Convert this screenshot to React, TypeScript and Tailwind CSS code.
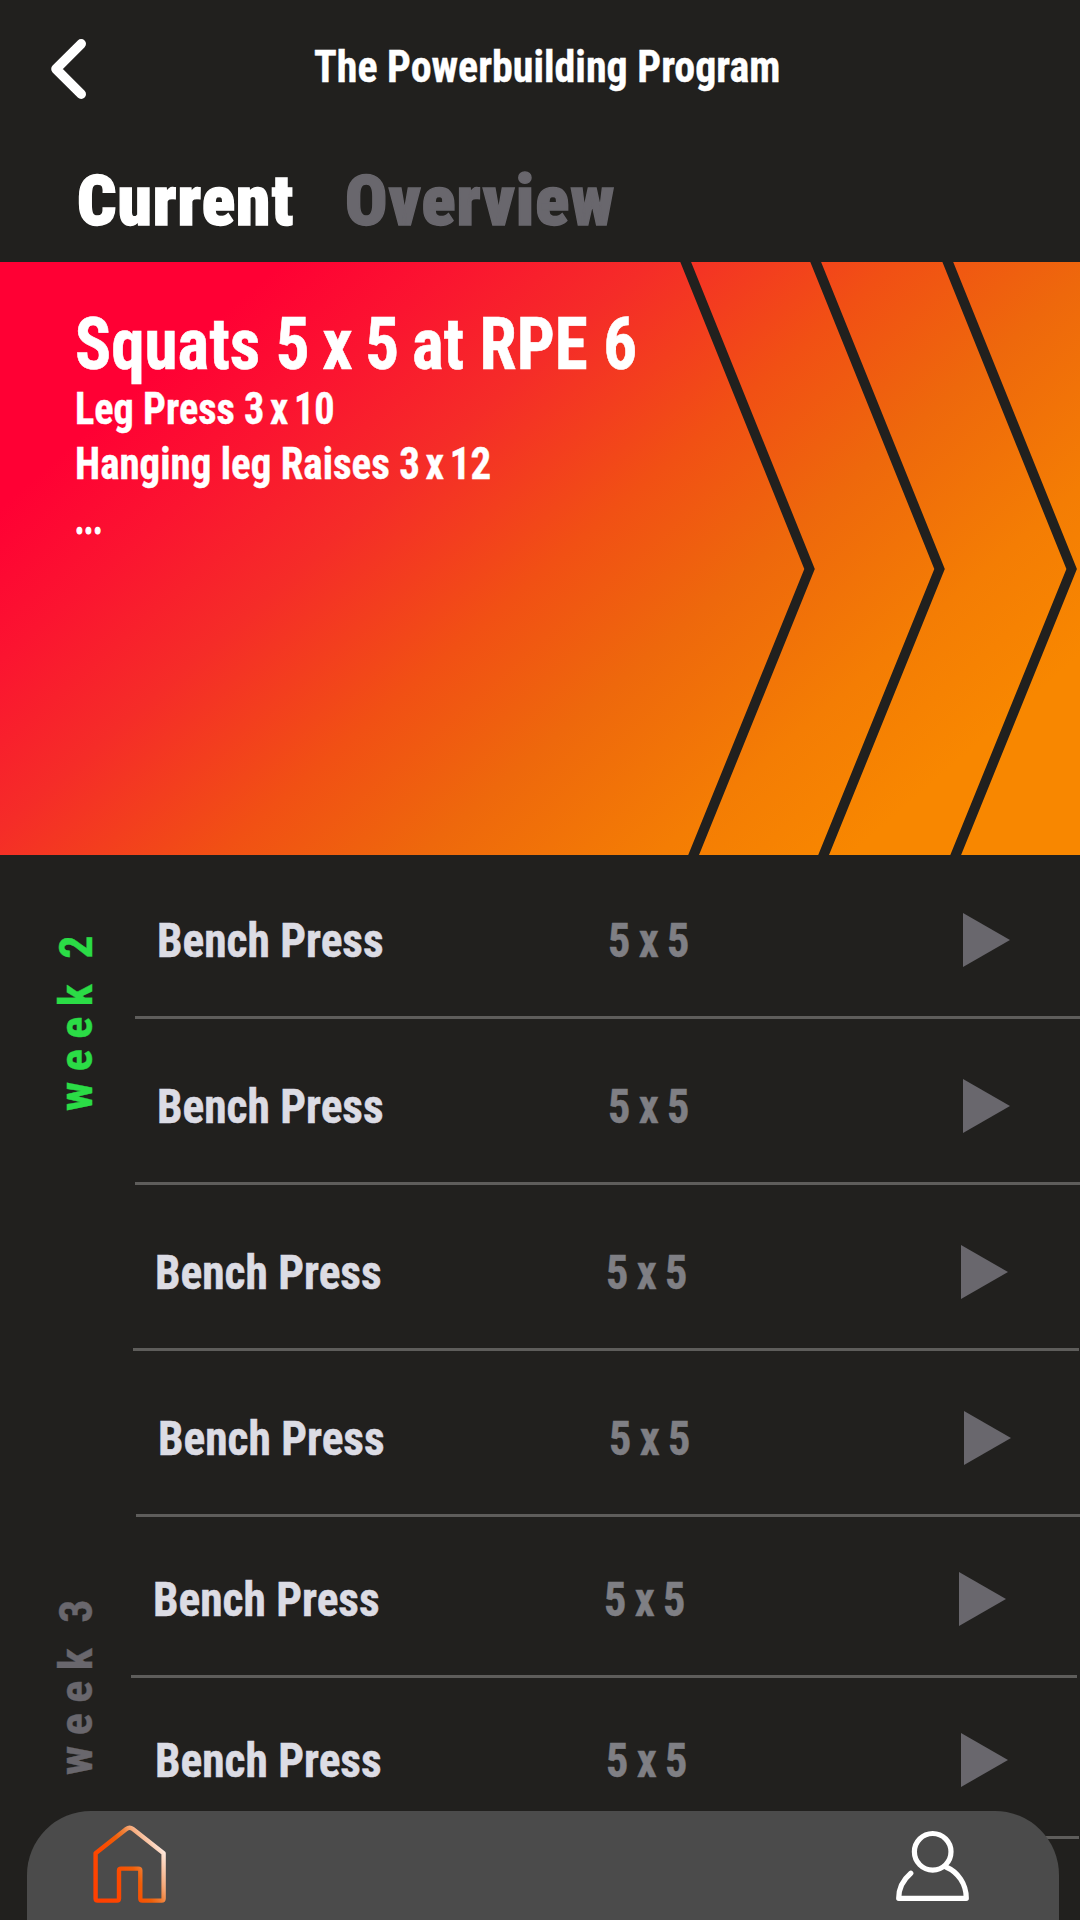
import { useLayoutEffect, useRef, useState, type ReactNode } from "react";

// Condenses a line of text horizontally so that it fills the given width.
function Fit({ width, className = "", children }: { width: number; className?: string; children: ReactNode }) {
  const ref = useRef<HTMLSpanElement>(null);
  const [scale, setScale] = useState(1);
  useLayoutEffect(() => {
    if (ref.current) setScale(width / ref.current.offsetWidth);
  }, [width]);
  return (
    <span ref={ref} className={`inline-block origin-left whitespace-nowrap ${className}`} style={{ transform: `scaleX(${scale})` }}>
      {children}
    </span>
  );
}

const BackIcon = () => (
  <svg className="h-[62px] w-[38px]" viewBox="0 0 38 62" fill="none" stroke="#fff" strokeWidth="9.6" strokeLinecap="round" strokeLinejoin="round">
    <path d="M31.200 5.800 6 31 31.200 56.200" />
  </svg>
);

const PlayIcon = () => (
  <svg className="h-[54px] w-[47px]" viewBox="0 0 47 54" fill="#69676d">
    <path d="M0 0 47 27 0 54z" />
  </svg>
);

const Chevrons = () => (
  <svg className="absolute inset-y-0 right-0 h-[593px] w-[400px]" viewBox="680 0 400 593" fill="#21201e">
    <path d="M680.3 0h10.8L814.8 307 699 593h-10.8L804.3 307z" />
    <path d="M810.3 0h10.8L944.8 307 829 593h-10.8L934.3 307z" />
    <path d="M942.4 0h10.8L1076.9 307 961.1 593h-10.8L1066.4 307z" />
  </svg>
);

const HomeIcon = () => (
  <svg className="h-[78px] w-[74px]" viewBox="0 0 74 78" fill="none">
    <defs>
      <linearGradient id="home" gradientUnits="userSpaceOnUse" x1="2" y1="66" x2="73" y2="26">
        <stop offset="0" stopColor="#ff4000" />
        <stop offset="0.36" stopColor="#fb4a00" />
        <stop offset="0.54" stopColor="#ef5e08" />
        <stop offset="0.67" stopColor="#f0813a" />
        <stop offset="0.76" stopColor="#f6a878" />
        <stop offset="1" stopColor="#fff0e8" />
      </linearGradient>
    </defs>
    <path
      d="M2.6 28.3 33.3 4Q36.6 1.4 39.9 4L70.6 28.3V73.6Q70.6 75.6 68.6 75.6H49.3Q47.3 75.6 47.3 73.6V45.6Q47.3 43.6 45.3 43.6H28Q26 43.6 26 45.6V73.6Q26 75.6 24 75.6H4.6Q2.6 75.6 2.6 73.6Z"
      stroke="url(#home)"
      strokeWidth="4.4"
      strokeLinejoin="round"
    />
  </svg>
);

const UserIcon = () => (
  <svg className="h-[72px] w-[75px]" viewBox="0 0 75 72" fill="none" stroke="#fff" strokeWidth="5.2" strokeLinecap="round" strokeLinejoin="round">
    <circle cx="37.7" cy="21.800" r="18.3" />
    <path d="M15.800 43.300C8 50 3.700 58.500 3.700 68.300H71.300C71.300 54 63 42 51 37" />
  </svg>
);

function ExerciseRow({ className }: { className: string }) {
  return (
    <div className={`grid w-[946px] shrink-0 grid-cols-[449px_357px_1fr] items-end border-b-[3px] border-[#5e5d5b] pb-[49px] pl-[22px] leading-[53px] ${className}`}>
      <Fit width={227} className="justify-self-start text-[48px] font-bold text-[#dcdce4] [-webkit-text-stroke:0.5px_#dcdce4]">Bench Press</Fit>
      <Fit width={81} className="ml-[2px] justify-self-start text-[48px] font-bold text-[#7f7f84] [-webkit-text-stroke:0.5px_#7f7f84] [word-spacing:-2px]">5 x 5</Fit>
      <PlayIcon />
    </div>
  );
}

function Week({ label, color, rows, className }: { label: string; color: string; rows: string[]; className: string }) {
  return (
    <section className="flex">
      <div className="w-[131px] shrink-0">
        <div className={`ml-[48px] rotate-180 text-[46px] font-bold leading-[56px] tracking-[10.5px] [word-spacing:-6px] [-webkit-text-stroke:0.4px_currentColor] [writing-mode:vertical-rl] ${color} ${className}`}>{label}</div>
      </div>
      <div className="flex flex-col">
        {rows.map((row, i) => (
          <ExerciseRow key={i} className={row} />
        ))}
      </div>
    </section>
  );
}

export default function App() {
  return (
    <div className="relative flex h-[1920px] w-[1080px] flex-col overflow-hidden bg-[#21201e] font-['Roboto_Condensed','Roboto',sans-serif] text-white">
      <header className="flex h-[262px] shrink-0 flex-col">
        <div className="flex h-[165px] items-start pl-[50px] pt-[38px]">
          <BackIcon />
          <h1 className="ml-[226px] mt-[7px] text-[44px] font-bold leading-none">
            <Fit width={466} className="[-webkit-text-stroke:0.4px_white]">The Powerbuilding Program</Fit>
          </h1>
        </div>
        <nav className="flex text-[71px] font-black leading-none tracking-[1px]">
          <div className="ml-[77px] w-[268px]">
            <Fit width={217} className="[-webkit-text-stroke:1.4px_white]">Current</Fit>
          </div>
          <Fit width={270} className="text-[#69676d] [-webkit-text-stroke:1.4px_#69676d]">Overview</Fit>
        </nav>
      </header>

      <section className="relative h-[593px] shrink-0 bg-[linear-gradient(139deg,#ff0034_16%,#fb1430_26%,#f52c28_37%,#f15014_51%,#ee680c_62.5%,#f47d04_76%,#f88700_87%)] pl-[75px] pt-[46px] font-bold">
        <Chevrons />
        <h2 className="h-[74px] text-[72px] leading-[74px]">
          <Fit width={562} className="[-webkit-text-stroke:0.6px_white]">
            Squats <span className="[word-spacing:-3px]">5 x 5 at</span> RPE 6
          </Fit>
        </h2>
        <div className="flex flex-col items-start text-[44px] leading-[55px] [-webkit-text-stroke:0.4px_white]">
          <Fit width={260}>
            Leg Press <span className="[word-spacing:-4px]">3 x 10</span>
          </Fit>
          <Fit width={416}>
            Hanging leg Raises <span className="[word-spacing:-4px]">3 x 12</span>
          </Fit>
          <Fit width={27} className="[-webkit-text-stroke:1.2px_white]">...</Fit>
        </div>
      </section>

      <main className="flex flex-col">
        <Week label="week 2" color="text-[#2bdc46]" className="mt-[70px]" rows={["ml-[4px] h-[164px]", "ml-[4px] h-[166px]", "ml-[2px] h-[166px]", "ml-[5px] h-[166px]"]} />
        <Week label="week 3" color="text-[#69676d]" className="mt-[72px]" rows={["h-[161px]", "ml-[2px] h-[161px]"]} />
      </main>

      <footer className="absolute left-[27px] top-[1811px] flex h-[109px] w-[1032px] items-start justify-between rounded-t-[64px] bg-[#4b4b4b] pl-[66px] pr-[89px]">
        <div className="mt-[14px]"><HomeIcon /></div>
        <div className="mt-[19px]"><UserIcon /></div>
      </footer>
    </div>
  );
}
